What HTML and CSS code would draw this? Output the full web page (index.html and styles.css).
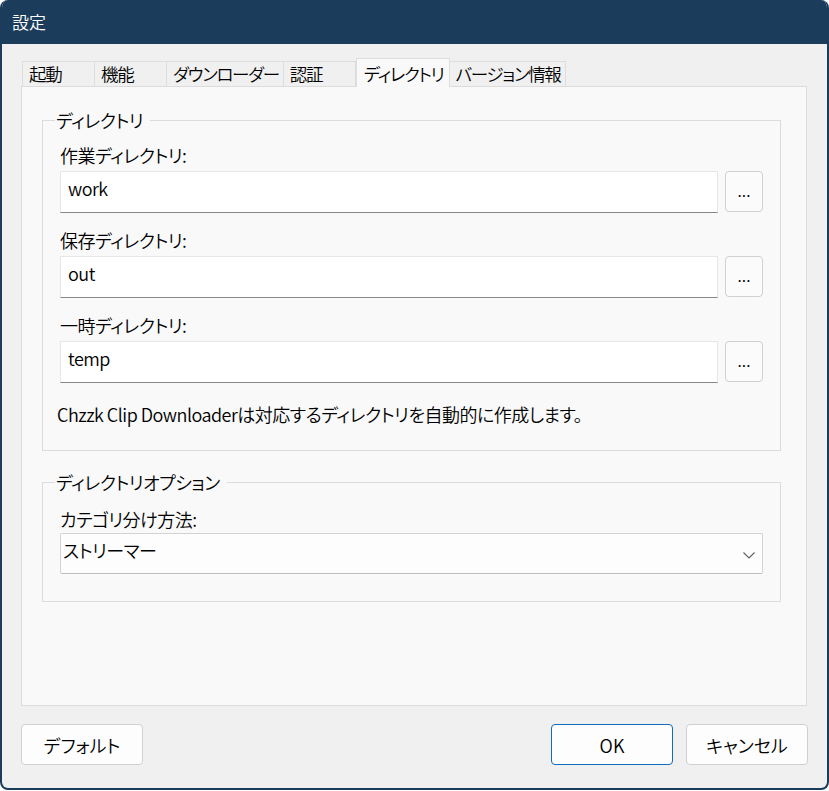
FILE: index.html
```html
<!DOCTYPE html>
<html lang="ja">
<head>
<meta charset="utf-8">
<title>設定</title>
<link rel="stylesheet" href="styles.css">
</head>
<body>
<div class="window">
  <div class="titlebar">設定</div>
  <div class="content">
    <div class="tabs">
      <div class="tab">起動</div>
      <div class="tab">機能</div>
      <div class="tab">ダウンローダー</div>
      <div class="tab">認証</div>
      <div class="tab active">ディレクトリ</div>
      <div class="tab">バージョン情報</div>
    </div>
    <div class="panel">
      <fieldset class="group">
        <legend>ディレクトリ</legend>
        <div class="field">
          <div class="label">作業ディレクトリ:</div>
          <div class="row">
            <div class="input">work</div>
            <button class="browse">...</button>
          </div>
        </div>
        <div class="field">
          <div class="label">保存ディレクトリ:</div>
          <div class="row">
            <div class="input">out</div>
            <button class="browse">...</button>
          </div>
        </div>
        <div class="field">
          <div class="label">一時ディレクトリ:</div>
          <div class="row">
            <div class="input">temp</div>
            <button class="browse">...</button>
          </div>
        </div>
        <p class="note">Chzzk Clip Downloaderは対応するディレクトリを自動的に作成します。</p>
      </fieldset>
      <fieldset class="group group2">
        <legend>ディレクトリオプション</legend>
        <div class="label">カテゴリ分け方法:</div>
        <div class="select">
          <span>ストリーマー</span>
          <svg class="chev" width="12" height="7" viewBox="0 0 12 7"><path d="M0.5 0.5 L6 6 L11.5 0.5" fill="none" stroke="#5f5f5f" stroke-width="1.1"/></svg>
        </div>
      </fieldset>
    </div>
    <div class="footer">
      <button class="btn">デフォルト</button>
      <div class="spacer"></div>
      <button class="btn primary">OK</button>
      <button class="btn">キャンセル</button>
    </div>
  </div>
</div>
</body>
</html>
```
FILE: styles.css
```css
html, body {
  margin: 0;
  padding: 0;
  background: #ffffff;
}
body {
  font-family: "Noto Sans CJK JP", "Noto Sans", sans-serif;
  font-size: 18px;
  font-weight: 350;
  line-height: 24px;
  letter-spacing: -0.5px;
  color: #000;
  font-feature-settings: "palt";
}
.window {
  width: 829px;
  height: 790px;
  box-sizing: border-box;
  border: 2px solid #1b3d5b;
  border-top: 0;
  border-radius: 8px;
  background: #f0f0f0;
  overflow: hidden;
  display: flex;
  flex-direction: column;
}
.titlebar {
  height: 44px;
  background: #1b3d5b;
  color: #fff;
  font-size: 17px;
  letter-spacing: 0;
  line-height: 44px;
  padding-left: 12px;
  margin: 0 -2px;
}
.content {
  padding: 14px 20px 0 19px;
  display: flex;
  flex-direction: column;
}
.tabs {
  display: flex;
  align-items: flex-end;
  height: 28px;
  padding-left: 1px;
}
.tab {
  height: 24px;
  min-width: 61px;
  padding: 0 4px 0 6px;
  border: 1px solid #dddddd;
  border-bottom: 0;
  margin-right: -1px;
  background: #f0f0f0;
  font-size: 17.5px;
  line-height: 24px;
  white-space: nowrap;
  letter-spacing: -1.3px;
}
.tab.active {
  height: 28px;
  line-height: 29px;
  background: #f9f9f9;
  padding: 0 5px 0 7px;
  margin-left: 1px;
  margin-bottom: -1px;
  position: relative;
  z-index: 1;
}
.panel {
  height: 620px;
  box-sizing: border-box;
  border: 1px solid #dcdcdc;
  background: #f9f9f9;
  padding: 21px 25px 0 20px;
}
.group {
  margin: 0;
  border: 1px solid #dcdcdc;
  padding: 11px 17px 24px 17px;
  min-width: 0;
}
.group legend {
  padding: 0 7px 0 1px;
  margin-left: -5px;
  line-height: 24px;
}
.group2 {
  margin-top: 19px;
  padding-top: 13px;
  padding-bottom: 27px;
}
.field + .field {
  margin-top: 15px;
}
.label {
  line-height: 24px;
}
.row {
  display: flex;
  gap: 7px;
  margin-top: 4px;
  align-items: flex-start;
}
.input {
  flex: 1;
  height: 42px;
  box-sizing: border-box;
  background: #fff;
  border: 1px solid #e6e6e6;
  border-bottom: 1px solid #868686;
  padding: 4px 7px 0;
  line-height: 24px;
}
.browse {
  width: 38px;
  height: 41px;
  box-sizing: border-box;
  border: 1px solid #d0d0d0;
  border-radius: 4px;
  background: #fbfbfb;
  font: inherit;
  font-size: 16px;
  line-height: 20px;
  padding: 0 0 4px;
  color: #000;
}
.note {
  margin: 19px 0 0 -3px;
  line-height: 24px;
}
.select {
  margin-top: 2px;
  height: 41px;
  box-sizing: border-box;
  background: #fdfdfd;
  border: 1px solid #d3d3d3;
  border-bottom-color: #bdbdbd;
  border-radius: 2px;
  padding: 4px 7px 0 2px;
  display: flex;
  justify-content: space-between;
  align-items: flex-start;
}
.chev {
  margin-top: 14px;
}
.footer {
  display: flex;
  margin-top: 18px;
  margin-right: -1px;
  gap: 13px;
}
.spacer {
  flex: 1;
}
.btn {
  width: 122px;
  height: 41px;
  box-sizing: border-box;
  border: 1px solid #d0d0d0;
  border-radius: 4px;
  background: #fdfdfd;
  font: inherit;
  color: #000;
  padding: 0;
}
.btn.primary {
  border-color: #0f6cbd;
}
```
